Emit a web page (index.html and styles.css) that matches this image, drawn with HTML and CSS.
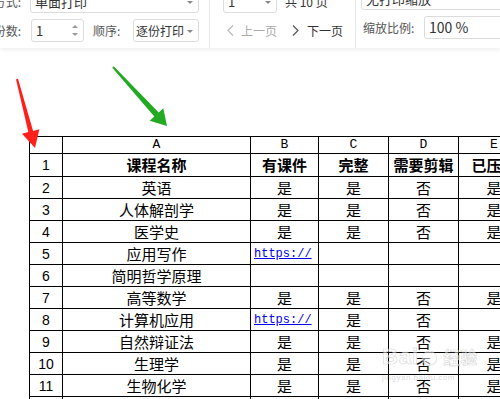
FILE: index.html
```html
<!DOCTYPE html>
<html lang="zh-CN">
<head>
<meta charset="utf-8">
<title>打印预览</title>
<link rel="stylesheet" href="styles.css">
</head>
<body>
<div class="toolbar">
  <div class="tb-inner">
    <div class="sec sec-left">
      <div class="row">
        <span class="lbl lbl-first">方式:</span>
        <div class="box box-wide">单面打印<span class="caret"></span></div>
      </div>
      <div class="row">
        <span class="lbl lbl-first">份数:</span>
        <div class="box box-num">1
          <span class="spin"><span class="up"></span><span class="down"></span></span>
        </div>
        <span class="lbl lbl-order">顺序:</span>
        <div class="box box-sel">逐份打印<span class="caret"></span></div>
      </div>
    </div>
    <div class="sec sec-mid">
      <div class="row">
        <div class="box box-page">1<span class="caret"></span></div>
        <span class="lbl lbl-total">共 10 页</span>
      </div>
      <div class="row nav">
        <span class="prev">
          <svg class="chev" width="7" height="11" viewBox="0 0 7 11"><polyline points="6,0.5 1,5.5 6,10.5" fill="none" stroke="currentColor" stroke-width="1.2"/></svg>
          上一页
        </span>
        <span class="next">
          <svg class="chev" width="7" height="11" viewBox="0 0 7 11"><polyline points="1,0.5 6,5.5 1,10.5" fill="none" stroke="currentColor" stroke-width="1.2"/></svg>
          下一页
        </span>
      </div>
    </div>
    <div class="sec sec-right">
      <div class="row">
        <div class="box box-zoom">无打印缩放</div>
      </div>
      <div class="row">
        <span class="lbl lbl-scale">缩放比例:</span>
        <div class="box box-pct">100 %</div>
      </div>
    </div>
  </div>
</div>

<div class="sheet">
  <table class="grid">
    <colgroup>
      <col class="c-num"><col class="c-a"><col class="c-b"><col class="c-c"><col class="c-d"><col class="c-e">
    </colgroup>
    <tr class="hdr">
      <td></td><td>A</td><td>B</td><td>C</td><td>D</td><td>E</td>
    </tr>
    <tr class="r1">
      <td class="n">1</td><th>课程名称</th><th>有课件</th><th>完整</th><th>需要剪辑</th><th>已压缩</th>
    </tr>
    <tr><td class="n">2</td><td>英语</td><td>是</td><td>是</td><td>否</td><td>是</td></tr>
    <tr><td class="n">3</td><td>人体解剖学</td><td>是</td><td>是</td><td>否</td><td>是</td></tr>
    <tr><td class="n">4</td><td>医学史</td><td>是</td><td>是</td><td>否</td><td>是</td></tr>
    <tr><td class="n">5</td><td>应用写作</td><td class="lnk"><a href="#">https://</a></td><td></td><td></td><td></td></tr>
    <tr><td class="n">6</td><td>简明哲学原理</td><td></td><td></td><td></td><td></td></tr>
    <tr><td class="n">7</td><td>高等数学</td><td>是</td><td>是</td><td>否</td><td>是</td></tr>
    <tr><td class="n">8</td><td>计算机应用</td><td class="lnk"><a href="#">https://</a></td><td>是</td><td>否</td><td></td></tr>
    <tr><td class="n">9</td><td>自然辩证法</td><td>是</td><td>是</td><td>否</td><td>是</td></tr>
    <tr><td class="n">10</td><td>生理学</td><td>是</td><td>是</td><td>否</td><td>是</td></tr>
    <tr><td class="n">11</td><td>生物化学</td><td>是</td><td>是</td><td>否</td><td>是</td></tr>
    <tr><td class="n">12</td><td>病理学</td><td>是</td><td>是</td><td>否</td><td>是</td></tr>
  </table>

  <div class="watermark">
    <span class="wm-bai">Bai</span><span class="wm-paw">&#9679;</span><span class="wm-jy">经验</span>
    <div class="wm-url">jingyan.baidu.com</div>
  </div>
</div>

<svg class="arrows" width="500" height="399" viewBox="0 0 500 399">
  <polygon fill="#ff1f1a" points="16,79.3 18,78.7 33.1,130.9 39.4,129.2 35,148 22,133.8 28.3,132.1"/>
  <polygon fill="#23aa23" points="112.3,67.7 113.7,66.3 158.7,112.5 163.3,108.3 167,126 149.7,120.7 154.3,116.5"/>
</svg>
</body>
</html>
```

FILE: styles.css
```css
html, body {
  margin: 0;
  padding: 0;
  background: #fff;
}
body {
  position: relative;
  width: 500px;
  height: 399px;
  overflow: hidden;
  font-family: "Noto Sans CJK SC", "Noto Sans", sans-serif;
}

/* ---------- toolbar ---------- */
.toolbar {
  height: 48px;
  background: #fff;
  box-shadow: 0 2px 5px rgba(0, 0, 0, 0.07);
  overflow: hidden;
  position: relative;
  z-index: 1;
}
.tb-inner {
  display: flex;
  margin-top: -10px;
  height: 58px;
}
.sec {
  display: flex;
  flex-direction: column;
  gap: 6px;
  border-right: 1px solid #e8e8e8;
  flex: none;
}
.row {
  display: flex;
  align-items: center;
  height: 23px;
  font-size: 12px;
  color: #555;
}
.lbl {
  white-space: nowrap;
  line-height: 23px;
}
.box {
  position: relative;
  box-sizing: border-box;
  height: 23px;
  border: 1px solid #dcdcdc;
  border-radius: 3px;
  padding: 0 4px;
  line-height: 21px;
  font-size: 13px;
  color: #333;
  background: #fff;
  white-space: nowrap;
}
.caret {
  position: absolute;
  right: 5px;
  top: 10px;
  width: 0;
  height: 0;
  border-left: 3px solid transparent;
  border-right: 3px solid transparent;
  border-top: 3px solid #888;
}

.sec-left {
  margin-left: -14px;
  width: 223px;
}
.lbl-first {
  width: 35px;
  margin-right: 9px;
  text-align: right;
}
.box-wide { width: 169px; }
.box-num { width: 53px; margin-left: 1px; }
.spin {
  position: absolute;
  right: 5px;
  top: 5px;
  display: flex;
  flex-direction: column;
  gap: 5px;
}
.spin .up, .spin .down {
  width: 0;
  height: 0;
  border-left: 3px solid transparent;
  border-right: 3px solid transparent;
}
.spin .up { border-bottom: 3px solid #999; }
.spin .down { border-top: 3px solid #999; }
.lbl-order { margin-left: 9px; width: 32px; }
.box-sel { width: 66px; margin-left: 8px; font-size: 12px; padding-left: 2px; }

.sec-mid {
  padding-left: 13px;
  box-sizing: border-box;
  width: 146px;
}
.box-page { width: 54px; }
.lbl-total { margin-left: 8px; color: #333; }
.nav {
  padding-left: 4px;
  gap: 15px;
}
.prev, .next {
  display: flex;
  align-items: center;
  gap: 7px;
}
.prev { color: #aaa; }
.prev .chev { color: #bbb; }
.next { color: #333; gap: 8px; }
.next .chev { color: #555; }

.sec-right {
  margin-top: -3px;
  padding-left: 5px;
  border-right: none;
  flex: 1;
}
.box-zoom { width: 160px; }
.lbl-scale { width: 51px; margin-left: 2px; }
.box-pct { width: 110px; margin-left: 10px; font-size: 14px; }

/* ---------- sheet ---------- */
.sheet {
  position: relative;
  padding: 88px 0 0 29px;
}
.grid {
  border-collapse: collapse;
  table-layout: fixed;
  width: 500px;
  font-family: "Noto Sans CJK SC", "Noto Sans", sans-serif;
  font-size: 15px;
  color: #000;
}
.c-num { width: 33px; }
.c-a { width: 188px; }
.c-b { width: 68px; }
.c-c { width: 70px; }
.c-d { width: 70px; }
.c-e { width: 71px; }
.grid td, .grid th {
  border: 1px solid #000;
  padding: 0;
  text-align: center;
  vertical-align: middle;
  line-height: 16px;
  white-space: nowrap;
  overflow: hidden;
}
.grid tr { height: 22px; }
.grid tr.hdr { height: 17px; }
.grid tr.r1 { height: 23px; }
.hdr td {
  font-family: "Liberation Mono", "DejaVu Sans Mono", monospace;
  font-size: 13px;
  line-height: 14px;
}
.grid th {
  font-weight: 700;
  font-size: 15px;
}
.grid td.n {
  font-family: "Liberation Sans", "DejaVu Sans", sans-serif;
  font-size: 14px;
}
.grid td.lnk {
  text-align: left;
  padding-left: 3px;
  line-height: 14px;
  font-size: 12px;
}
.grid td.lnk a {
  font-family: "Liberation Mono", "DejaVu Sans Mono", monospace;
  font-size: 12px;
  line-height: 14px;
  color: #0000ee;
  text-decoration: underline;
  vertical-align: top;
}

/* ---------- watermark ---------- */
.watermark {
  position: absolute;
  left: 382px;
  top: 298px;
  color: rgba(255, 255, 255, 0.5);
  -webkit-text-stroke: 0.6px rgba(170, 170, 170, 0.5);
  white-space: nowrap;
  pointer-events: none;
  line-height: 1;
}
.wm-bai {
  font-family: "Liberation Sans", Arial, sans-serif;
  font-weight: 700;
  font-size: 22px;
  letter-spacing: 1px;
}
.wm-paw {
  font-size: 16px;
  margin: 0 6px 0 2px;
}
.wm-jy {
  font-size: 17px;
  font-weight: 700;
}
.wm-url {
  font-family: "Liberation Sans", Arial, sans-serif;
  font-size: 8px;
  -webkit-text-stroke: 0;
  color: rgba(160, 160, 160, 0.4);
  margin-top: 6px;
  letter-spacing: 0.5px;
}

/* ---------- annotation arrows ---------- */
.arrows {
  position: absolute;
  left: 0;
  top: 0;
  pointer-events: none;
  z-index: 2;
}
```
